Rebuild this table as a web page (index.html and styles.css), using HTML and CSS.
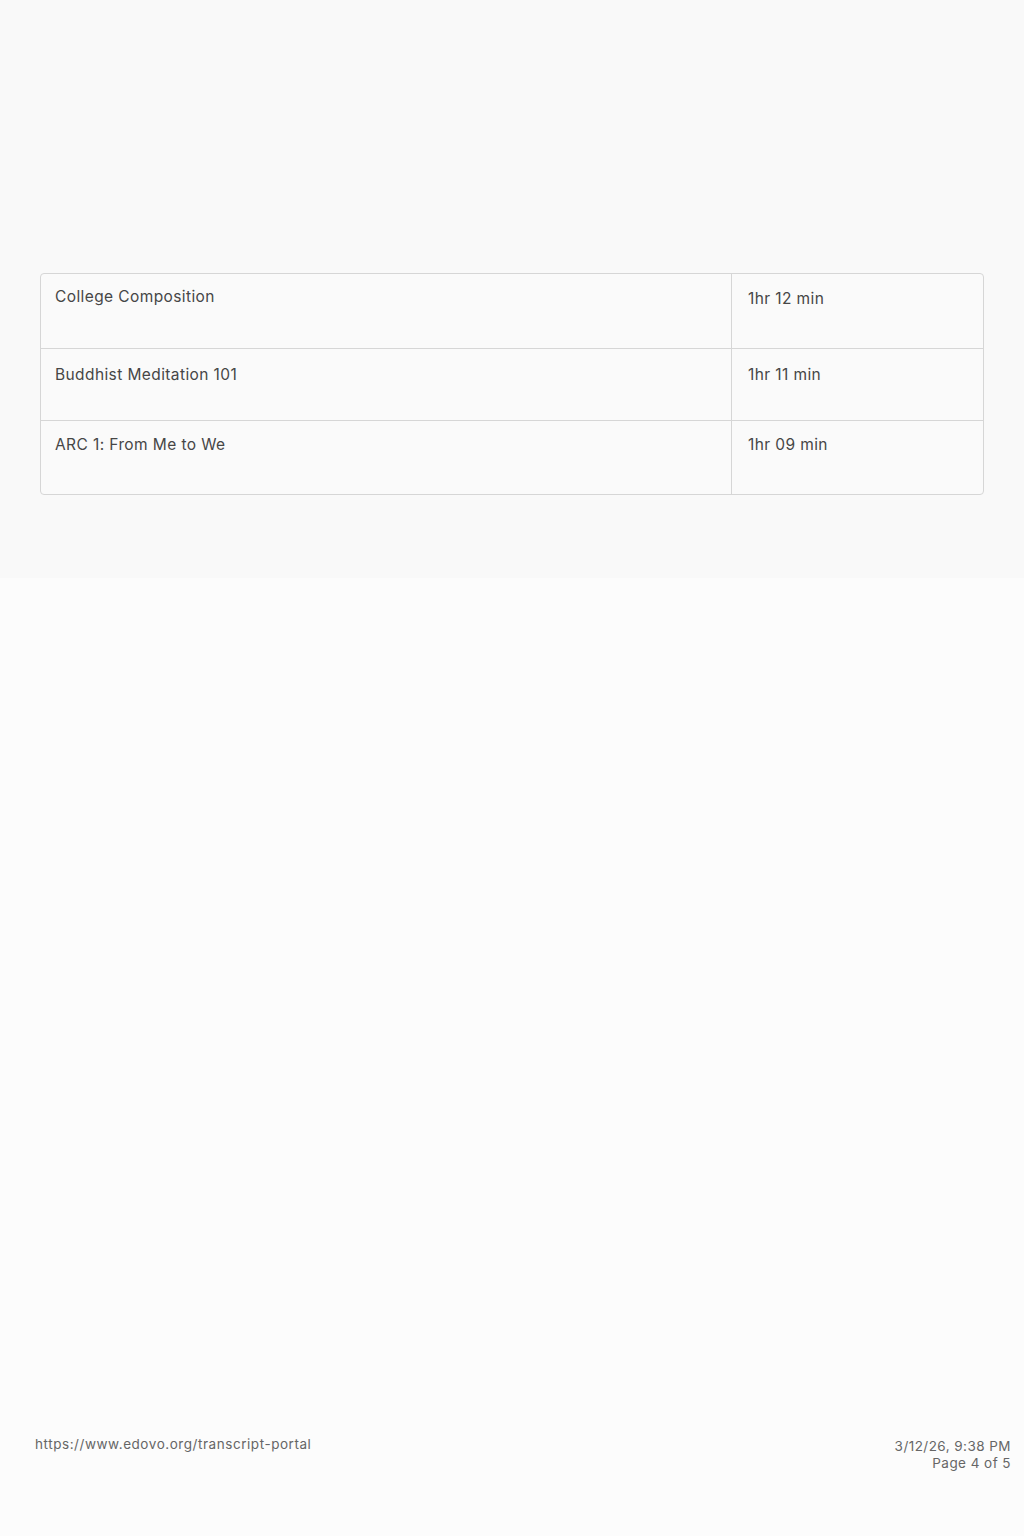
FILE: index.html
```html
<!DOCTYPE html>
<html lang="en">
<head>
<meta charset="utf-8">
<title>Transcript</title>
<link rel="stylesheet" href="styles.css">
</head>
<body>
<div class="page">
  <section class="sheet">
    <div class="table">
      <div class="row row-1">
        <div class="cell name">College Composition</div>
        <div class="cell time t-low">1hr 12 min</div>
      </div>
      <div class="row row-2">
        <div class="cell name">Buddhist Meditation 101</div>
        <div class="cell time">1hr 11 min</div>
      </div>
      <div class="row row-3">
        <div class="cell name">ARC 1: From Me to We</div>
        <div class="cell time">1hr 09 min</div>
      </div>
    </div>
  </section>
  <footer class="footer">
    <div class="url">https://www.edovo.org/transcript-portal</div>
    <div class="meta">
      <div>3/12/26, 9:38 PM</div>
      <div>Page 4 of 5</div>
    </div>
  </footer>
</div>
</body>
</html>
```
FILE: styles.css
```css
html, body {
  margin: 0;
  padding: 0;
  background: #fcfcfc;
  font-family: Inter, "Noto Sans", "Liberation Sans", sans-serif;
  color: #464646;
}
.page {
  min-height: 1536px;
  display: flex;
  flex-direction: column;
}
.sheet {
  background: #f9f9f9;
  height: 578px;
  box-sizing: border-box;
  padding: 273px 40px 0 40px;
}
.table {
  border: 1px solid #d6d6d6;
  border-radius: 4px;
  background: #fafafa;
}
.row {
  display: grid;
  grid-template-columns: 691px 1fr;
  border-top: 1px solid #d6d6d6;
}
.row-1 { border-top: none; height: 74px; }
.row-2 { height: 71px; }
.row-3 { height: 73px; }
.cell {
  font-size: 15.5px;
  line-height: 20px;
  letter-spacing: 0.4px;
  padding: 0 14px;
}
.name {
  border-right: 1px solid #d6d6d6;
}
.row-1 .cell { padding-top: 13px; }
.row-1 .t-low { padding-top: 15px; }
.row-2 .cell { padding-top: 16px; }
.row-3 .cell { padding-top: 14px; }
.time { padding-left: 16px; }
.footer {
  margin-top: auto;
  display: flex;
  justify-content: space-between;
  align-items: flex-start;
  padding: 0 13px 64px 35px;
  font-size: 13.5px;
  line-height: 17px;
  color: #666;
}
.url { letter-spacing: 0.55px; }
.meta { text-align: right; padding-top: 2px; letter-spacing: 0.45px; }
```
